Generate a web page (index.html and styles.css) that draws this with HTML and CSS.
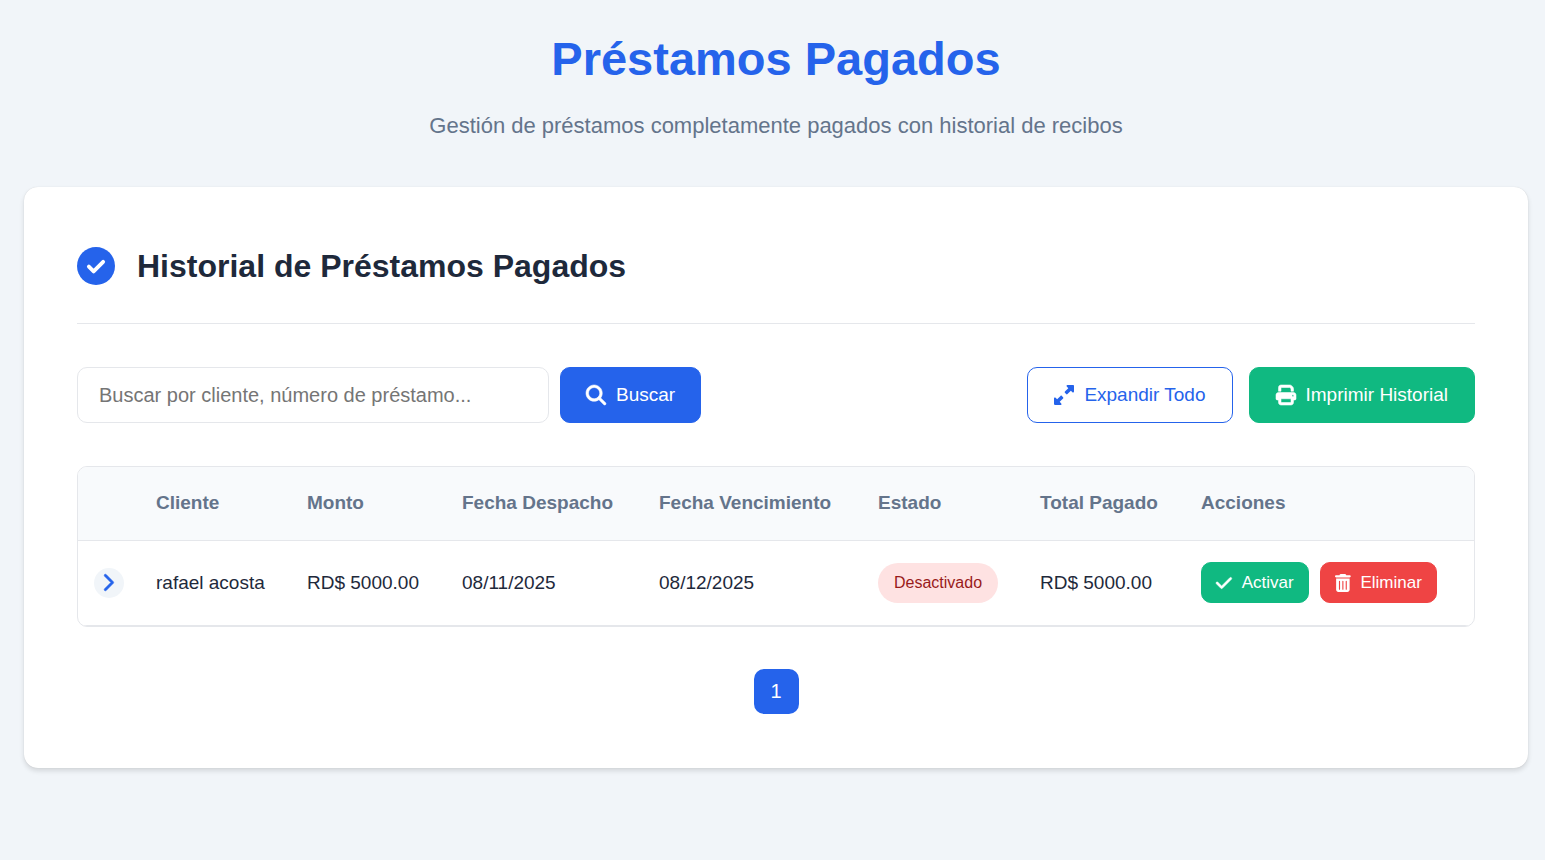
FILE: index.html
```html
<!DOCTYPE html>
<html lang="es">
<head>
  <meta charset="UTF-8">
  <meta name="viewport" content="width=device-width, initial-scale=1.0">
  <title>Préstamos Pagados</title>
  <link rel="stylesheet" href="styles.css">
</head>
<body>

  <header class="page-header">
    <h1>Préstamos Pagados</h1>
    <p>Gestión de préstamos completamente pagados con historial de recibos</p>
  </header>

  <main class="card">
    <div class="card-header">
      <svg class="card-icon" viewBox="0 0 512 512" aria-hidden="true">
        <circle cx="256" cy="256" r="256" fill="currentColor"/>
        <path d="M160 265l64 64 128-128" fill="none" stroke="#fff" stroke-width="52" stroke-linecap="round" stroke-linejoin="round"/>
      </svg>
      <h2>Historial de Préstamos Pagados</h2>
    </div>

    <div class="toolbar">
      <form class="search-form" onsubmit="return false">
        <input type="text" class="search-input" aria-label="Buscar préstamo" placeholder="Buscar por cliente, número de préstamo...">
        <button type="submit" class="btn btn-primary">
          <svg class="icon icon-bold" viewBox="0 0 512 512" aria-hidden="true"><path fill="currentColor" d="M416 208c0 45.900-14.900 88.300-40 122.700L502.600 457.400c12.500 12.500 12.500 32.800 0 45.300s-32.800 12.500-45.300 0L330.700 376c-34.400 25.200-76.800 40-122.700 40C93.100 416 0 322.900 0 208S93.100 0 208 0S416 93.100 416 208zM208 352a144 144 0 1 0 0-288 144 144 0 1 0 0 288z"/></svg>
          Buscar
        </button>
      </form>
      <div class="toolbar-actions">
        <button type="button" class="btn btn-outline">
          <svg class="icon" viewBox="0 0 512 512" aria-hidden="true"><path fill="currentColor" d="M344 0H488c13.300 0 24 10.700 24 24V168c0 9.700-5.800 18.500-14.800 22.200s-19.300 1.700-26.200-5.200l-39-39-87 87c-9.400 9.400-24.600 9.400-33.900 0l-32-32c-9.400-9.400-9.400-24.600 0-33.900l87-87L327 41c-6.900-6.900-8.900-17.200-5.200-26.200S334.300 0 344 0zM168 512H24c-13.300 0-24-10.700-24-24V344c0-9.700 5.800-18.500 14.800-22.200s19.300-1.700 26.200 5.200l39 39 87-87c9.400-9.400 24.600-9.400 33.900 0l32 32c9.400 9.400 9.400 24.600 0 33.900l-87 87 39 39c6.900 6.900 8.900 17.200 5.200 26.200s-12.500 14.800-22.200 14.800z"/></svg>
          Expandir Todo
        </button>
        <button type="button" class="btn btn-success">
          <svg class="icon icon-bold" viewBox="0 0 512 512" aria-hidden="true"><path fill="currentColor" d="M128 0C92.700 0 64 28.700 64 64v96h64V64H354.700L384 93.300V160h64V93.300c0-17-6.700-33.300-18.700-45.300L400 18.700C388 6.700 371.700 0 354.700 0H128zM384 352v32 64H128V384 368 352H384zm64 32h32c17.700 0 32-14.300 32-32V256c0-35.300-28.700-64-64-64H64c-35.300 0-64 28.700-64 64v96c0 17.700 14.300 32 32 32H64v64c0 35.300 28.700 64 64 64H384c35.300 0 64-28.700 64-64V384zM432 248a24 24 0 1 1 0 48 24 24 0 1 1 0-48z"/></svg>
          Imprimir Historial
        </button>
      </div>
    </div>

    <div class="table-container">
      <table>
        <colgroup>
          <col class="col-toggle">
          <col class="col-cliente">
          <col class="col-monto">
          <col class="col-despacho">
          <col class="col-vencimiento">
          <col class="col-estado">
          <col class="col-total">
          <col>
        </colgroup>
        <thead>
          <tr>
            <th></th>
            <th>Cliente</th>
            <th>Monto</th>
            <th>Fecha Despacho</th>
            <th>Fecha Vencimiento</th>
            <th>Estado</th>
            <th>Total Pagado</th>
            <th>Acciones</th>
          </tr>
        </thead>
        <tbody>
          <tr>
            <td class="toggle-cell">
              <button type="button" class="toggle-btn" aria-label="Ver recibos">
                <svg class="icon icon-bold" viewBox="32 0 320 512" aria-hidden="true"><path fill="currentColor" d="M310.600 233.400c12.500 12.500 12.500 32.800 0 45.300l-192 192c-12.500 12.500-32.800 12.500-45.300 0s-12.500-32.800 0-45.300L242.700 256 73.400 86.600c-12.500-12.500-12.500-32.800 0-45.300s32.800-12.500 45.300 0l192 192z"/></svg>
              </button>
            </td>
            <td>rafael acosta</td>
            <td>RD$ 5000.00</td>
            <td>08/11/2025</td>
            <td>08/12/2025</td>
            <td><span class="badge">Desactivado</span></td>
            <td>RD$ 5000.00</td>
            <td>
              <div class="row-actions">
                <button type="button" class="btn btn-sm btn-success">
                  <svg class="icon icon-bold" viewBox="0 0 448 512" aria-hidden="true"><path fill="currentColor" d="M438.600 105.400c12.500 12.500 12.500 32.800 0 45.300l-256 256c-12.500 12.500-32.800 12.500-45.300 0l-128-128c-12.500-12.500-12.500-32.800 0-45.300s32.800-12.500 45.300 0L160 338.700 393.400 105.400c12.500-12.500 32.800-12.500 45.300 0z"/></svg>
                  Activar
                </button>
                <button type="button" class="btn btn-sm btn-danger">
                  <svg class="icon" viewBox="0 0 448 512" aria-hidden="true"><path fill="currentColor" d="M135.200 17.700L128 32H32C14.300 32 0 46.300 0 64S14.300 96 32 96H416c17.700 0 32-14.300 32-32s-14.300-32-32-32H320l-7.200-14.300C307.400 6.800 296.300 0 284.200 0H163.800c-12.100 0-23.200 6.800-28.600 17.700zM416 128H32V448c0 35.300 28.700 64 64 64H352c35.300 0 64-28.700 64-64V128zM144 208V432c0 8.800-7.200 16-16 16s-16-7.200-16-16V208c0-8.800 7.200-16 16-16s16 7.200 16 16zm96 0V432c0 8.800-7.200 16-16 16s-16-7.200-16-16V208c0-8.800 7.200-16 16-16s16 7.200 16 16zm96 0V432c0 8.800-7.200 16-16 16s-16-7.200-16-16V208c0-8.800 7.200-16 16-16s16 7.200 16 16z"/></svg>
                  Eliminar
                </button>
              </div>
            </td>
          </tr>
        </tbody>
      </table>
    </div>

    <nav class="pagination" aria-label="Paginación">
      <a href="#" class="page-link active" aria-current="page">1</a>
    </nav>
  </main>

</body>
</html>
```
FILE: styles.css
```css
* { margin: 0; padding: 0; box-sizing: border-box; }

body {
  font-family: Arial, "Liberation Sans", sans-serif;
  background-color: #f1f5f9;
  color: #1e293b;
  padding: 29px 17px 28px 24px;
}

.page-header { text-align: center; margin-bottom: 44px; }
.page-header h1 { font-size: 47px; line-height: 60px; color: #2563eb; margin-bottom: 20px; }
.page-header p { font-size: 22px; line-height: 34px; color: #64748b; }

.card {
  background-color: #fff;
  border-radius: 14px;
  box-shadow: 0 0 1px rgba(0, 0, 0, 0.15), 0 3px 5px rgba(0, 0, 0, 0.12);
  padding: 52px 53px 54px;
}

.card-header {
  display: flex;
  align-items: center;
  gap: 22px;
  padding-bottom: 30px;
  margin-bottom: 43px;
  border-bottom: 1px solid #e5e7eb;
}
.card-header h2 { font-size: 32px; line-height: 54px; }
.card-icon { width: 38px; height: 38px; color: #2563eb; }

.toolbar { display: flex; justify-content: space-between; align-items: center; gap: 16px; margin-bottom: 43px; }
.search-form { display: flex; gap: 11px; }
.toolbar-actions { display: flex; gap: 16px; }
.search-input {
  width: 472px;
  height: 56px;
  padding: 0 21px;
  font-family: inherit;
  font-size: 20px;
  color: #1e293b;
  background-color: #fff;
  border: 1px solid #e5e7eb;
  border-radius: 10px;
}
.search-input::placeholder { color: #757575; }

.btn {
  display: inline-flex;
  align-items: center;
  justify-content: center;
  gap: 10px;
  height: 56px;
  padding: 0 26px;
  font-family: inherit;
  font-size: 19px;
  color: #fff;
  white-space: nowrap;
  border: 1px solid transparent;
  border-radius: 10px;
  cursor: pointer;
}
.icon { height: 20px; overflow: visible; }
.icon-bold { stroke: currentColor; stroke-width: 14; }
.btn-primary { padding: 0 25px; background-color: #2563eb; border-color: #2563eb; }
.btn-outline { background-color: #fff; color: #2563eb; border-color: #2563eb; }
.btn-success { background-color: #10b981; border-color: #10b981; }
.btn-danger { background-color: #ef4444; border-color: #ef4444; }
.btn-sm { height: 41px; padding: 0 14px; font-size: 17px; }
.btn-sm .icon { height: 18px; }

.table-container { border: 1px solid #e5e7eb; border-radius: 10px; overflow: hidden; }
table { width: 100%; table-layout: fixed; border-collapse: collapse; font-size: 19px; }
th, td { padding: 0 0 0 21px; text-align: left; white-space: nowrap; }
th { height: 73px; background-color: #f8fafc; color: #64748b; border-bottom: 1px solid #e5e7eb; }
td { height: 85px; border-bottom: 1px solid #e5e7eb; }
.col-toggle { width: 57px; }
.col-cliente { width: 151px; }
.col-monto { width: 155px; }
.col-despacho { width: 197px; }
.col-vencimiento { width: 219px; }
.col-estado { width: 162px; }
.col-total { width: 161px; }

.toggle-cell { padding: 0 0 0 16px; }
.toggle-btn {
  display: flex;
  align-items: center;
  justify-content: center;
  width: 30px;
  height: 30px;
  border: none;
  border-radius: 50%;
  background-color: #f1f5f9;
  color: #2563eb;
  cursor: pointer;
}
.toggle-btn .icon { height: 19px; }
.badge {
  display: inline-block;
  padding: 0 16px;
  line-height: 40px;
  font-size: 16px;
  color: #991b1b;
  background-color: #fee2e2;
  border-radius: 20px;
}
.row-actions { display: flex; gap: 11px; }

.pagination { display: flex; justify-content: center; margin-top: 42px; }
.page-link {
  width: 45px;
  line-height: 45px;
  text-align: center;
  font-size: 20px;
  text-decoration: none;
  border-radius: 10px;
}
.page-link.active { background-color: #2563eb; color: #fff; }
```
